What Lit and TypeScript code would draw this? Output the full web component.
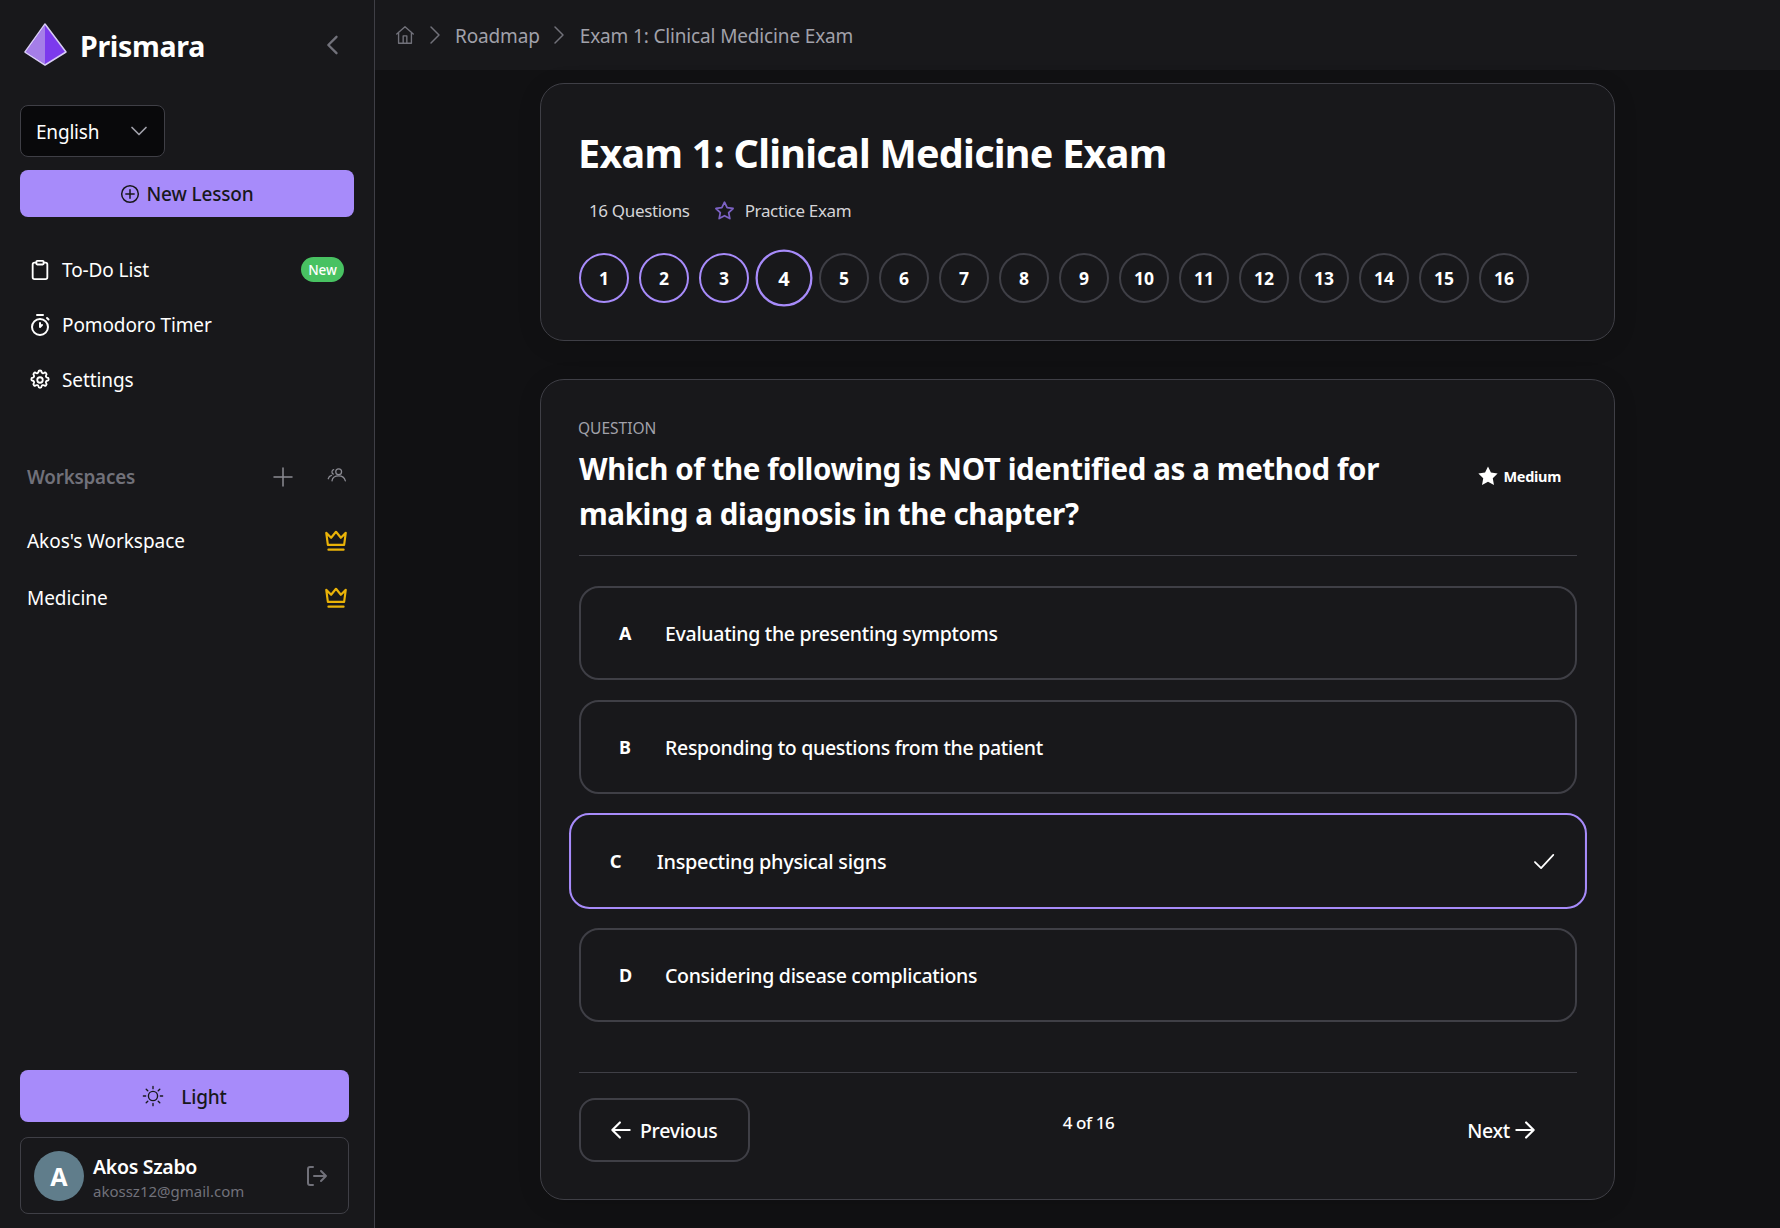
import { LitElement, html, css, svg } from 'lit';
import { customElement } from 'lit/decorators.js';

const icon = (size: number, body: unknown, sw = 2) => html`<svg width=${size} height=${size} viewBox="0 0 24 24" fill="none" stroke="currentColor" stroke-width=${sw} stroke-linecap="round" stroke-linejoin="round">${body}</svg>`;

const crown = svg`<path d="M3 4.500 7.500 9 12 3.500 16.500 9 21 4.500 19.500 15.500h-15z"/><path d="M5 20h14"/>`;
const arrowLeft = svg`<path d="M20 12H4M11 5l-7 7 7 7"/>`;
const arrowRight = svg`<path d="M4 12h16M13 5l7 7-7 7"/>`;
const chevron = svg`<path d="M8 4l8 8-8 8"/>`;

@customElement('app-root')
export class AppRoot extends LitElement {
  static styles = css`
    :host {
      display: grid;
      grid-template-columns: 375px 1fr;
      height: 1228px;
      overflow: hidden;
      background: #111113;
      color: #fff;
      font-family: 'Noto Sans', 'Open Sans', sans-serif;
    }
    svg { display: block; flex: none; }

    .side {
      display: flex;
      flex-direction: column;
      background: #18181b;
      border-right: 1px solid #3f3f46;
      padding: 23px 20px 14px;
      box-sizing: border-box;
      height: 1228px;
    }
    .brand { display: flex; align-items: center; height: 43px; padding-left: 4px; }
    .brand b { font-size: 28.5px; font-weight: 700; margin-left: 13px; letter-spacing: -0.3px; padding-top: 2px; }
    .collapse { margin-left: auto; margin-right: 7px; color: #71717a; }
    .lang {
      display: flex; align-items: center; justify-content: space-between;
      width: 145px; height: 52px; box-sizing: border-box; margin-top: 39px;
      padding: 0 13px 0 15px; background: #09090b; border: 1px solid #3f3f46; border-radius: 8px;
      font-size: 19px; letter-spacing: -0.2px;
    }
    .lang span { padding-top: 2px; }
    .lang svg { color: #a1a1aa; }
    .primary {
      display: flex; align-items: center; justify-content: center;
      background: #a78bfa; color: #18181b; border-radius: 8px; font-size: 19px; font-weight: 500;
      letter-spacing: -0.15px;
    }
    .new { height: 47px; margin-top: 13px; gap: 6px; width: 334px; }
    .nav { display: flex; flex-direction: column; margin-top: 25px; }
    .nav-row { display: flex; align-items: center; height: 55px; padding-left: 9px; gap: 11px; font-size: 19px; letter-spacing: -0.1px; }
    .nav-row .big { margin: 0 -1px; }
    .badge {
      margin-left: auto; margin-right: 10px; height: 25px; width: 43px; border-radius: 13px;
      background: #48c262; font-size: 13.500px; font-weight: 500;
      display: flex; align-items: center; justify-content: center;
    }
    .ws-head { display: flex; align-items: center; margin-top: 50px; padding-left: 7px; height: 40px; color: #71717a; font-size: 18.800px; font-weight: 600; letter-spacing: -0.2px; }
    .ws-head .plus { margin-left: auto; margin-right: 32px; color: #8b8b93; }
    .ws-head .team { margin-right: 7px; margin-top: -4px; color: #8b8b93; }
    .ws-row { display: flex; align-items: center; justify-content: space-between; height: 57px; padding: 0 5px 0 7px; font-size: 19px; letter-spacing: -0.05px; }
    .ws-row svg { color: #eab308; }
    .ws-list { margin-top: 15px; }
    .light { margin-top: auto; width: 329px; height: 52px; gap: 17px; font-size: 19px; }
    .light span { padding-top: 2px; }
    .user {
      display: flex; align-items: center; width: 329px; height: 77px; box-sizing: border-box;
      margin-top: 15px; padding: 0 20px 0 13px; border: 1px solid #3f3f46; border-radius: 8px;
    }
    .avatar {
      width: 50px; height: 50px; border-radius: 50%; background: #607d8b; font-size: 25px; font-weight: 700;
      display: flex; align-items: center; justify-content: center; flex: none;
    }
    .who { margin-left: 9px; flex: 1; padding-top: 4px; }
    .who b { display: block; font-size: 19.500px; font-weight: 600; line-height: 26px; letter-spacing: -0.3px; }
    .who span { display: block; font-size: 15px; line-height: 22px; color: #71717a; }
    .user svg { color: #71717a; }

    .main { display: flex; flex-direction: column; min-width: 0; }
    .crumbs {
      display: flex; align-items: center; height: 70px; flex: none; box-sizing: border-box;
      padding-left: 19px; background: #18181b; color: #a1a1aa; font-size: 19px; letter-spacing: -0.15px;
    }
    .crumbs .home { color: #71717a; }
    .crumbs .sep { color: #71717a; margin: 0 8px 0 7px; }
    .crumbs .text { padding-top: 2px; }
    .crumbs .last { margin-left: 1px; }
    .content { display: flex; flex-direction: column; align-items: center; padding-top: 13px; gap: 38px; }
    .card {
      width: 1075px; box-sizing: border-box; padding: 0 37px 0 38px; background: #18181b;
      border: 1px solid #3f3f46; border-radius: 24px; box-shadow: 0 4px 24px rgba(0,0,0,.12);
    }
    .head { height: 258px; padding-top: 45px; }
    h1 { margin: 0 0 0 -1px; font-size: 39.500px; line-height: 48px; font-weight: 700; letter-spacing: -0.73px; }
    .meta { display: flex; align-items: center; margin-top: 21px; height: 24px; padding-left: 10px; font-size: 17px; color: #d4d4d8; letter-spacing: -0.35px; }
    .meta svg { color: #7c62c4; margin: 0 10px 0 24px; }
    .steps { display: flex; gap: 10px; margin-top: 31px; }
    .step {
      width: 50px; height: 50px; box-sizing: border-box; border-radius: 50%; border: 2px solid #3f3f46;
      display: flex; align-items: center; justify-content: center; font-size: 17.500px; font-weight: 700;
    }
    .step.done { border-color: #a78bfa; }
    .step.current { transform: scale(1.14); }

    .q { height: 821px; padding-top: 38px; padding-left: 37px; }
    .label { font-size: 15.500px; line-height: 20px; color: #a1a1aa; }
    .q-row { display: flex; align-items: flex-start; justify-content: space-between; padding-bottom: 19px; border-bottom: 1px solid #3f3f46; margin-top: 8px; margin-left: 1px; }
    h2 { margin: 0; max-width: 840px; font-size: 29.500px; line-height: 45px; font-weight: 700; letter-spacing: -0.4px; }
    .level { display: flex; align-items: center; gap: 4px; padding-right: 16px; margin-top: 19px; font-size: 14.500px; font-weight: 700; letter-spacing: -0.3px; }
    .options { display: flex; flex-direction: column; gap: 20px; margin-top: 30px; margin-left: 1px; }
    .opt {
      display: flex; align-items: center; height: 94px; box-sizing: border-box; padding: 0 28px 0 38px;
      border: 2px solid #3f3f46; border-radius: 20px; font-size: 19.500px; font-weight: 500; letter-spacing: -0.3px;
    }
    .opt i { font-style: normal; font-weight: 700; width: 46px; font-size: 18px; }
    .opt.on { border-color: #a78bfa; transform: scale(1.02); }
    .opt svg { margin-left: auto; }
    .foot { display: grid; grid-template-columns: 1fr auto 1fr; margin-top: 50px; margin-left: 1px; padding-top: 25px; border-top: 1px solid #3f3f46; }
    .btn { display: flex; align-items: center; gap: 6px; height: 64px; box-sizing: border-box; font-size: 19.500px; font-weight: 500; letter-spacing: -0.3px; border: 2px solid transparent; border-radius: 16px; padding: 0 28px 0 27px; }
    .btn.prev { justify-self: start; border-color: #3f3f46; width: 171px; }
    .btn.next { justify-self: end; gap: 2px; padding-right: 37px; }
    .count { font-size: 17px; font-weight: 500; line-height: 50px; letter-spacing: -0.4px; padding-left: 21px; }
  `;

  render() {
    const steps = Array.from({ length: 16 }, (_, i) => i + 1);
    return html`
      <aside class="side">
        <div class="brand">
          <svg width="43" height="43" viewBox="0 0 43 43">
            <path d="M21 1 42 29 21 42 1 29Z" fill="#7c3aed" stroke="#d8cdf5" stroke-width="1.500" stroke-linejoin="round"/>
            <path d="M21 2V41L2 29Z" fill="#a57ee8"/>
          </svg>
          <b>Prismara</b>
          <span class="collapse">${icon(28, svg`<path d="M15 5l-7 7 7 7"/>`)}</span>
        </div>
        <div class="lang"><span>English</span> ${icon(24, svg`<path d="M5 8.500l7 7 7-7"/>`, 1.700)}</div>
        <div class="primary new">${icon(20, svg`<circle cx="12" cy="12" r="10"/><path d="M12 7v10M7 12h10"/>`, 1.800)} New Lesson</div>
        <nav class="nav">
          <div class="nav-row">
            ${icon(22, svg`<rect x="8" y="2" width="8" height="4" rx="1"/><path d="M16 4h2a2 2 0 0 1 2 2v14a2 2 0 0 1-2 2H6a2 2 0 0 1-2-2V6a2 2 0 0 1 2-2h2"/>`)}
            To-Do List <span class="badge">New</span>
          </div>
          <div class="nav-row">
            <span class="big">${icon(24, svg`<path d="M9 2h6M12 10v4l2-2"/><circle cx="12" cy="14" r="8"/><path d="M19 5l1.500 1.500"/>`)}</span>
            Pomodoro Timer
          </div>
          <div class="nav-row">
            ${icon(22, svg`<path d="M10.300 3.300a1.700 1.700 0 0 1 3.400 0 1.700 1.700 0 0 0 2.600 1.100 1.700 1.700 0 0 1 2.400 2.400 1.700 1.700 0 0 0 1.100 2.600 1.700 1.700 0 0 1 0 3.400 1.700 1.700 0 0 0-1.100 2.600 1.700 1.700 0 0 1-2.400 2.400 1.700 1.700 0 0 0-2.600 1.100 1.700 1.700 0 0 1-3.400 0 1.700 1.700 0 0 0-2.600-1.100 1.700 1.700 0 0 1-2.400-2.400 1.700 1.700 0 0 0-1.100-2.600 1.700 1.700 0 0 1 0-3.400 1.700 1.700 0 0 0 1.100-2.600 1.700 1.700 0 0 1 2.400-2.400 1.700 1.700 0 0 0 2.600-1.100z"/><circle cx="12" cy="12" r="3"/>`)}
            Settings
          </div>
        </nav>
        <div class="ws-head">
          Workspaces
          <span class="plus">${icon(24, svg`<path d="M12 3v18M3 12h18"/>`, 1.500)}</span>
          <span class="team">${icon(20, svg`<circle cx="14" cy="8" r="3.500"/><path d="M6 19c.5-4 4-6 8-6s7 2 8 6M8 5.500a3 3 0 0 0-.5 5.500M1.500 16.500c.5-2 1.800-3.500 4-4"/>`, 1.500)}</span>
        </div>
        <div class="ws-list">
          <div class="ws-row">Akos's Workspace ${icon(26, crown)}</div>
          <div class="ws-row">Medicine ${icon(26, crown)}</div>
        </div>
        <div class="primary light">
          ${icon(22, svg`<circle cx="12" cy="12" r="5"/><path d="M12 1.500v2.500M12 20v2.500M1.500 12H4M20 12h2.500M4.600 4.600l1.700 1.700M17.700 17.700l1.700 1.700M4.600 19.400l1.700-1.700M17.700 6.300l1.700-1.700"/>`, 1.500)}
          <span>Light</span>
        </div>
        <div class="user">
          <div class="avatar">A</div>
          <div class="who"><b>Akos Szabo</b><span>akossz12@gmail.com</span></div>
          ${icon(24, svg`<path d="M9 3H6a2 2 0 0 0-2 2v14a2 2 0 0 0 2 2h3M10 12h12M17 7l5 5-5 5"/>`)}
        </div>
      </aside>
      <main class="main">
        <div class="crumbs">
          <span class="home">${icon(22, svg`<path d="M3 11l9-8 9 8M5 9v12h14V9M10 21v-8h4v8"/>`, 1.500)}</span>
          <span class="sep">${icon(24, chevron, 1.500)}</span>
          <span class="text">Roadmap</span>
          <span class="sep">${icon(24, chevron, 1.500)}</span>
          <span class="text last">Exam 1: Clinical Medicine Exam</span>
        </div>
        <div class="content">
          <section class="card head">
            <h1>Exam 1: Clinical Medicine Exam</h1>
            <div class="meta">
              16 Questions
              ${icon(21, svg`<path d="M12 2.500l3 6.300 6.800.9-5 4.700 1.300 6.800-6.100-3.300-6.100 3.300 1.300-6.800-5-4.700 6.800-.9z"/>`)}
              Practice Exam
            </div>
            <div class="steps">
              ${steps.map((n) => html`<div class="step ${n <= 4 ? 'done' : ''} ${n === 4 ? 'current' : ''}">${n}</div>`)}
            </div>
          </section>
          <section class="card q">
            <div class="label">QUESTION</div>
            <div class="q-row">
              <h2>Which of the following is NOT identified as a method for making a diagnosis in the chapter?</h2>
              <div class="level">
                <svg width="22" height="22" viewBox="0 0 24 24" fill="currentColor"><path d="M12 1.500l3.200 6.800 7.300 1-5.300 5.100 1.300 7.400L12 18.300l-6.500 3.500 1.300-7.400L1.500 9.300l7.300-1z"/></svg>
                Medium
              </div>
            </div>
            <div class="options">
              <div class="opt"><i>A</i>Evaluating the presenting symptoms</div>
              <div class="opt"><i>B</i>Responding to questions from the patient</div>
              <div class="opt on"><i>C</i>Inspecting physical signs ${icon(24, svg`<path d="M3 13l6 6L21 6"/>`, 1.700)}</div>
              <div class="opt"><i>D</i>Considering disease complications</div>
            </div>
            <div class="foot">
              <div class="btn prev">${icon(26, arrowLeft)} Previous</div>
              <div class="count">4 of 16</div>
              <div class="btn next">Next ${icon(26, arrowRight)}</div>
            </div>
          </section>
        </div>
      </main>
    `;
  }
}
